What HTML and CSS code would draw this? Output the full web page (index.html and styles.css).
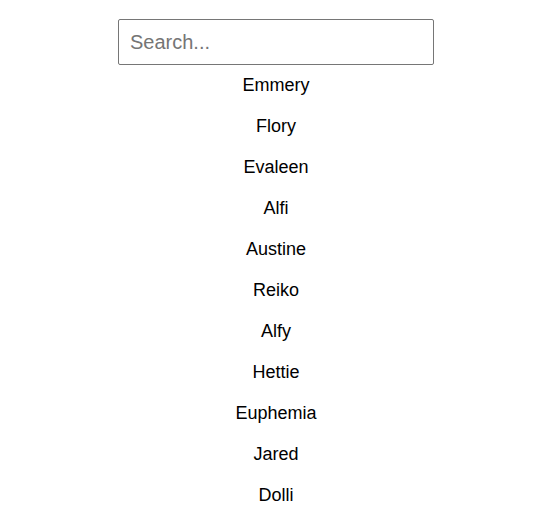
FILE: index.html
```html
<!DOCTYPE html>
<html>
<head>
<meta charset="utf-8">
<link rel="stylesheet" href="styles.css">
</head>
<body>
<div class="app">
  <input class="search" type="text" placeholder="Search...">
  <ul class="list">
    <li>Emmery</li>
    <li>Flory</li>
    <li>Evaleen</li>
    <li>Alfi</li>
    <li>Austine</li>
    <li>Reiko</li>
    <li>Alfy</li>
    <li>Hettie</li>
    <li>Euphemia</li>
    <li>Jared</li>
    <li>Dolli</li>
  </ul>
</div>
</body>
</html>
```
FILE: styles.css
```css
html, body {
  margin: 0;
  background: #fff;
}
body {
  padding: 8px 12px 8px 8px;
  font-family: "Liberation Sans", Arial, sans-serif;
  overflow: hidden;
}
.app {
  display: flex;
  flex-direction: column;
  align-items: center;
}
.search {
  box-sizing: border-box;
  width: 316px;
  height: 46px;
  margin-top: 11px;
  padding: 0 11px;
  border: 1px solid #767676;
  border-radius: 2px;
  font-family: "Liberation Sans", Arial, sans-serif;
  font-size: 20px;
  color: #000;
  outline: none;
}
.search::placeholder {
  color: #757575;
}
.list {
  list-style: none;
  margin: 0;
  padding: 0;
  text-align: center;
}
.list li {
  padding: 10px 0;
  font-size: 18px;
  line-height: 21px;
  color: #000;
}
```
